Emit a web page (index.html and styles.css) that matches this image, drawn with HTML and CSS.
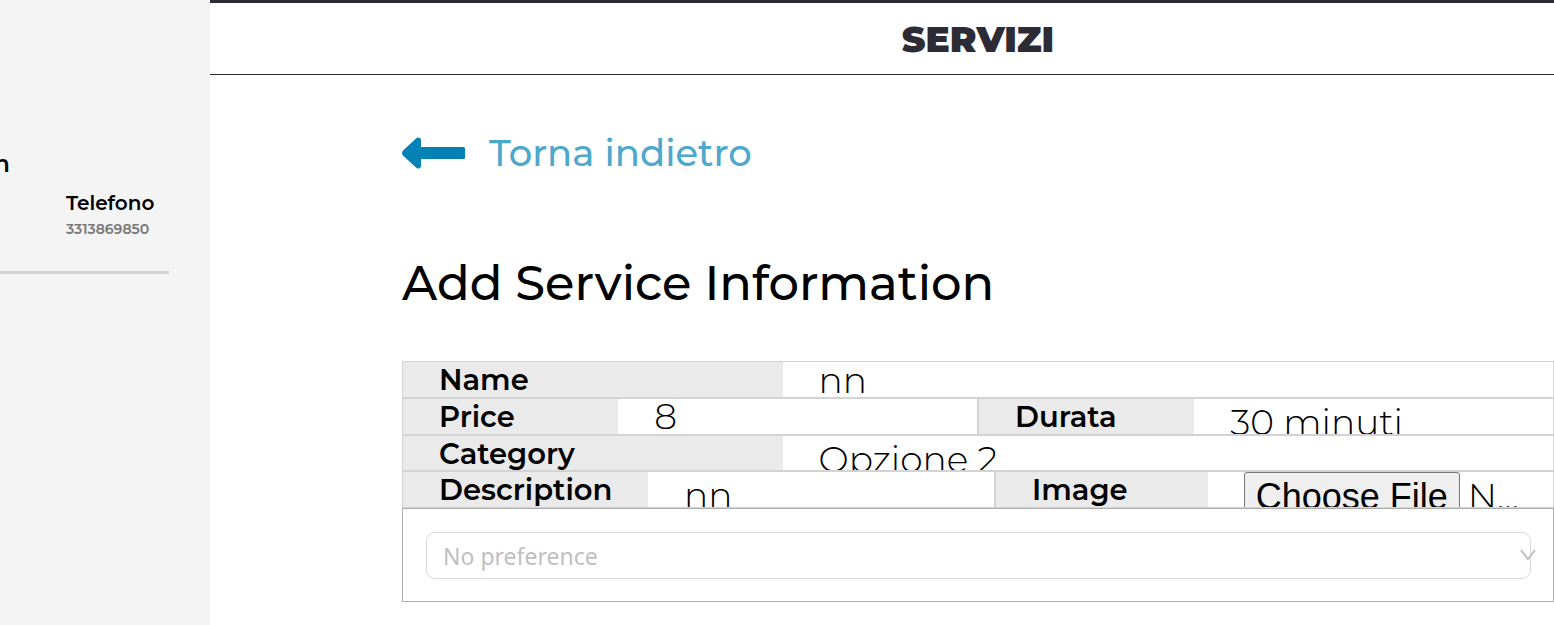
FILE: index.html
```html
<!DOCTYPE html>
<html lang="it">
<head>
<meta charset="utf-8">
<meta name="viewport" content="width=device-width, initial-scale=1">
<title>Servizi</title>
<link rel="stylesheet" href="styles.css">
</head>
<body>
<div class="layout">
  <aside class="sidebar">
    <div class="profile">
      <p class="profile-name">n</p>
      <div class="contact">
        <h2 class="contact-label">Telefono</h2>
        <p class="contact-value">3313869850</p>
      </div>
    </div>
  </aside>
  <main class="main">
    <header class="header"><h1 class="title">SERVIZI</h1></header>
    <div class="content">
      <a class="back" href="#">
        <svg class="back-icon" viewBox="0 0 64 32" aria-hidden="true"><path d="M1 13.5 14 1.5Q15.5 0 17.500 .8Q19 1.500 19 3V10H61.500Q63 10 63 11.500V20.500Q63 22 61.500 22H19V29Q19 30.500 17.500 31.200Q15.500 32 14 30.500L1 18.500Q-1 16 1 13.500Z"/></svg>
        <span>Torna indietro</span>
      </a>
      <h2 class="form-title">Add Service Information</h2>
      <form class="form">
        <div class="row">
          <div class="field field-wide"><label class="label" for="name">Name</label><div class="cell"><input class="control" id="name" type="text" value="nn"></div></div>
        </div>
        <div class="row row-halves">
          <div class="field field-half"><label class="label" for="price">Price</label><div class="cell"><input class="control control-high" id="price" type="text" value="8"></div></div>
          <div class="field field-half"><label class="label" for="duration">Durata</label><div class="cell"><select class="control control-low" id="duration"><option>30 minuti</option></select></div></div>
        </div>
        <div class="row">
          <div class="field field-wide field-short"><label class="label" for="category">Category</label><div class="cell"><select class="control control-low" id="category"><option>Opzione 2</option></select></div></div>
        </div>
        <div class="row row-media">
          <div class="field field-description"><label class="label" for="description">Description</label><div class="cell"><textarea class="control control-low" id="description" rows="1">nn</textarea></div></div>
          <div class="field field-image"><label class="label" for="image">Image</label><div class="cell"><input class="control file" id="image" type="file"></div></div>
        </div>
        <div class="preference">
          <div class="preference-box">
            <select class="preference-select" aria-label="Preference"><option>No preference</option></select>
            <svg class="chevron" viewBox="0 0 16 12" aria-hidden="true"><path d="M1 1 8 10 15 1"/></svg>
          </div>
        </div>
      </form>
    </div>
  </main>
</div>
</body>
</html>
```

FILE: styles.css
```css
* { box-sizing: border-box; }
body, h1, h2, p { margin: 0; }
body {
  background: #fff;
  color: #000;
  font-family: Montserrat, Inter, "Liberation Sans", sans-serif;
}
.layout { display: grid; grid-template-columns: 210px minmax(0, 1fr); min-height: 100vh; }
.sidebar { background: #f4f4f4; padding-top: 150px; overflow: hidden; }
.profile { width: 169px; padding-bottom: 29px; border-bottom: 3px solid #d3d3d3; }
.profile-name { display: flex; justify-content: flex-end; width: 10px; font-size: 24px; font-weight: 600; line-height: 28px; }
.contact { margin: 12px 0 0 66px; }
.contact-label { font-size: 20px; font-weight: 600; line-height: 26px; }
.contact-value { color: #777; font-size: 14px; font-weight: 600; line-height: 26px; }
.header {
  display: flex;
  align-items: center;
  justify-content: center;
  height: 75px;
  padding-left: 192px;
  border-top: 3px solid #2d2c36;
  border-bottom: 1px solid #2d2c36;
}
.title { color: #2d2c36; font-size: 36px; font-weight: 900; line-height: 44px; }
.content { padding: 54px 0 23px 192px; }
.back { display: inline-flex; align-items: center; gap: 23px; color: #4ea8cc; font-size: 37px; font-weight: 500; line-height: 48px; text-decoration: none; }
.back-icon { width: 64px; height: 32px; fill: #0582b5; }
.form-title { margin: 77px 0 48px; font-size: 48px; font-weight: 500; line-height: 59px; }
.row { display: grid; }
.row-halves { grid-template-columns: 1fr 1fr; }
.row-media { grid-template-columns: 593fr 559fr; }
.field { display: grid; height: 37px; border: 1px solid #d3d3d3; overflow: hidden; }
.field-wide { grid-template-columns: 33% minmax(0, 1fr); }
.field-short { height: 36px; }
.field-half { grid-template-columns: 3fr 5fr; }
.field-description { grid-template-columns: 245fr 346fr; }
.field-image { grid-template-columns: 38% minmax(0, 1fr); }
.label { padding-left: 36px; background: #eaeaea; font-size: 29px; font-weight: 600; line-height: 36px; }
.cell { min-width: 0; height: 35px; padding: 0 36px; overflow: hidden; }
.control {
  display: block;
  width: 100%;
  height: 36px;
  margin: 0;
  padding: 0;
  border: 0;
  outline: 0;
  appearance: none;
  background: transparent;
  color: #000;
  font-family: inherit;
  font-size: 36px;
  font-weight: 300;
  line-height: 36px;
  resize: none;
  overflow: hidden;
}
.control-high { height: 34px; line-height: 34px; }
.control-low { height: 46px; line-height: 46px; }
.file { height: 52px; text-overflow: ellipsis; }
.file::file-selector-button {
  height: 50px;
  margin-right: 8px;
  padding: 1px 11px;
  border: 1px solid #767676;
  border-radius: 3px;
  background: #efefef;
  color: #000;
  font: 36px "Liberation Sans", sans-serif;
}
.preference { padding: 23px 22px 22px 23px; border: 1px solid #aeaeae; }
.preference-box { position: relative; }
.preference-select {
  display: block;
  width: 100%;
  height: 47px;
  padding: 0 16px;
  border: 1px solid #d9d9d9;
  border-radius: 9px;
  appearance: none;
  background: #fff;
  color: #bfbfbf;
  font: 23px "Segoe UI", "Noto Sans", sans-serif;
}
.chevron { position: absolute; top: 17px; right: -5px; width: 16px; height: 12px; fill: none; stroke: #bfbfbf; stroke-width: 2; pointer-events: none; }
```
